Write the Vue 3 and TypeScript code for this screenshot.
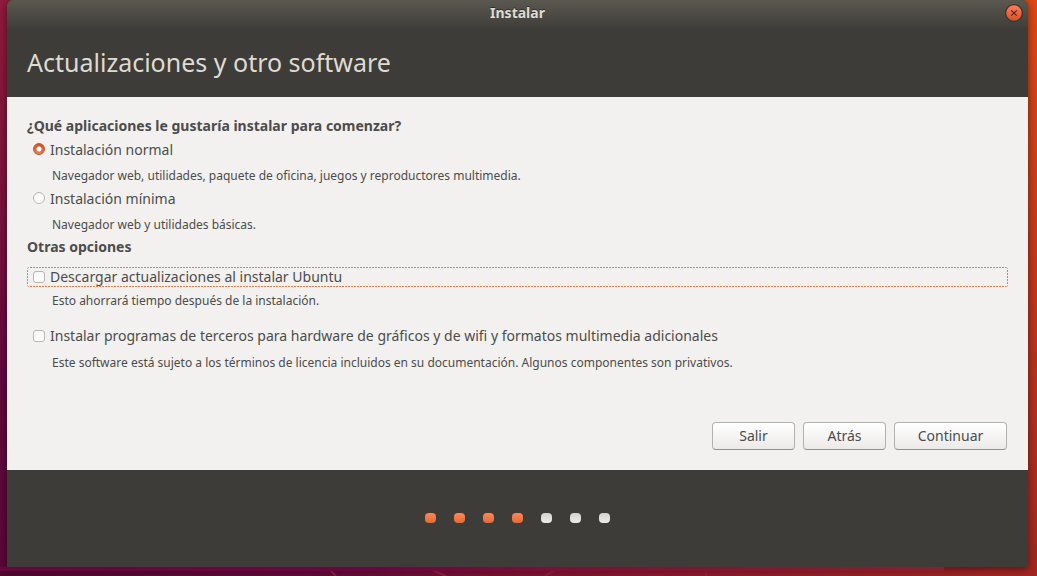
<script setup lang="ts">
import { ref } from 'vue'

interface InstallMode {
  id: string
  label: string
  hint: string
}

const modes: InstallMode[] = [
  {
    id: 'normal',
    label: 'Instalación normal',
    hint: 'Navegador web, utilidades, paquete de oficina, juegos y reproductores multimedia.',
  },
  { id: 'minimal', label: 'Instalación mínima', hint: 'Navegador web y utilidades básicas.' },
]

const mode = ref('normal')
const downloadUpdates = ref(false)
const thirdParty = ref(false)

const totalSteps = 7
const currentStep = 4
</script>

<template>
  <div class="desktop">
    <svg class="wallpaper" viewBox="0 0 1037 576" preserveAspectRatio="none" aria-hidden="true">
      <defs>
        <linearGradient id="left-side" x1="0" y1="0" x2="0" y2="1">
          <stop offset="0" stop-color="#931a3c" />
          <stop offset="0.35" stop-color="#7c143c" />
          <stop offset="0.65" stop-color="#65083f" />
          <stop offset="1" stop-color="#5a0838" />
        </linearGradient>
        <linearGradient id="right-side" x1="0" y1="0" x2="0" y2="1">
          <stop offset="0" stop-color="#dd4914" />
          <stop offset="0.5" stop-color="#c0381c" />
          <stop offset="1" stop-color="#a02822" />
        </linearGradient>
        <linearGradient id="bottom-side" x1="0" y1="0" x2="1" y2="0">
          <stop offset="0" stop-color="#520630" />
          <stop offset="0.3" stop-color="#600a38" />
          <stop offset="0.6" stop-color="#86162e" />
          <stop offset="1" stop-color="#a42621" />
        </linearGradient>
      </defs>
      <rect width="518" height="576" fill="url(#left-side)" />
      <rect x="518" width="519" height="576" fill="url(#right-side)" />
      <rect y="567" width="1037" height="9" fill="url(#bottom-side)" />
      <path
        d="M330 570l6 6M432 570l14 6M555 570l-10 6M706 570v6M824 570l-6 6"
        stroke="#8e1f3e"
        stroke-width="2"
        fill="none"
      />
    </svg>

    <main class="window">
      <header class="titlebar">
        <span class="titlebar-text">Instalar</span>
        <button class="close" type="button" aria-label="Cerrar">
          <svg viewBox="0 0 18 18" aria-hidden="true">
            <defs>
              <linearGradient id="close-fill" x1="0" y1="0" x2="0" y2="1">
                <stop offset="0" stop-color="#f78060" />
                <stop offset="1" stop-color="#e04c1c" />
              </linearGradient>
            </defs>
            <circle cx="9" cy="9" r="8.4" fill="url(#close-fill)" stroke="#35342f" stroke-width="1.2" />
            <path d="M6.2 6.4l5.6 5.2M11.8 6.4l-5.6 5.2" stroke="#4a2a1a" stroke-width="1.2" />
          </svg>
        </button>
      </header>

      <h1 class="page-title">Actualizaciones y otro software</h1>

      <form class="content" @submit.prevent>
        <fieldset class="group">
          <legend class="heading">¿Qué aplicaciones le gustaría instalar para comenzar?</legend>
          <div v-for="item in modes" :key="item.id" class="mode">
            <label class="option">
              <input v-model="mode" type="radio" name="mode" :value="item.id" class="radio" />
              <span>{{ item.label }}</span>
            </label>
            <p class="hint">{{ item.hint }}</p>
          </div>
        </fieldset>

        <fieldset class="group extras">
          <legend class="heading">Otras opciones</legend>
          <label class="option focused">
            <input v-model="downloadUpdates" type="checkbox" class="check" />
            <span>Descargar actualizaciones al instalar Ubuntu</span>
          </label>
          <p class="hint">Esto ahorrará tiempo después de la instalación.</p>
          <label class="option third-party">
            <input v-model="thirdParty" type="checkbox" class="check" />
            <span>Instalar programas de terceros para hardware de gráficos y de wifi y formatos multimedia adicionales</span>
          </label>
          <p class="hint">
            Este software está sujeto a los términos de licencia incluidos en su documentación. Algunos componentes son privativos.
          </p>
        </fieldset>

        <div class="actions">
          <button type="button" class="btn">Salir</button>
          <button type="button" class="btn">Atrás</button>
          <button type="submit" class="btn wide">Continuar</button>
        </div>
      </form>

      <footer class="steps">
        <span v-for="n in totalSteps" :key="n" class="dot" :class="{ done: n <= currentStep }"></span>
      </footer>
    </main>
  </div>
</template>

<style>
body {
  margin: 0;
}
</style>

<style scoped>
.desktop {
  position: relative;
  display: flex;
  box-sizing: border-box;
  min-height: 100vh;
  padding: 0 9px 9px 7px;
  overflow: hidden;
  background: #5a0838;
  color: #4c4c4c;
  font-family: 'Noto Sans', 'Open Sans', sans-serif;
  font-size: 14px;
  line-height: 20px;
}

/* Light band of the wallpaper under the window's lower edge */
.desktop::after {
  position: absolute;
  bottom: 5px;
  left: 0;
  width: 91%;
  height: 4px;
  background: linear-gradient(90deg, #62083c, #66083f 40%, #781236 60%, #86222a);
  content: '';
}

.wallpaper {
  position: absolute;
  inset: 0;
  width: 100%;
  height: 100%;
}

.window {
  position: relative;
  display: flex;
  flex: 1;
  flex-direction: column;
  border-radius: 6px 6px 0 0;
  background: #3d3c38;
  box-shadow: 0 2px 8px rgba(0, 0, 0, 0.5);
}

.titlebar {
  display: grid;
  grid-template-columns: 1fr auto 1fr;
  align-items: center;
  box-sizing: border-box;
  height: 27px;
  padding: 0 5px 2px;
  border-radius: 6px 6px 0 0;
  background: linear-gradient(#5b584f, #403f3a);
}

.titlebar-text {
  grid-column: 2;
  color: #dfdbd2;
  font-weight: 700;
  text-shadow: 0 -1px #2d2c28;
}

.close {
  justify-self: end;
  width: 18px;
  height: 18px;
  padding: 0;
  border: 0;
  border-radius: 50%;
  background: none;
}

.close svg {
  display: block;
}

.page-title {
  margin: 0;
  padding: 17px 20px;
  color: #dfdbd2;
  font-size: 25px;
  font-weight: 400;
  line-height: 36px;
}

.content {
  display: flex;
  flex: 1;
  flex-direction: column;
  padding: 19px 20px 20px;
  background: #f2f1ef;
}

.group {
  min-width: 0;
  margin: 0;
  padding: 0;
  border: 0;
}

.heading {
  margin-bottom: 4px;
  padding: 0;
  font-weight: 700;
}

.mode {
  margin-bottom: 3px;
}

.mode:last-child {
  margin-bottom: 2px;
}

.option {
  display: flex;
  align-items: center;
  gap: 5px;
  padding: 0 6px;
}

.hint {
  margin: 6px 0 0 25px;
  font-size: 12px;
}

.extras .heading {
  margin-bottom: 10px;
}

.focused {
  --dash: #f07746 0 2px, transparent 2px 3px;
  height: 20px;
  border-radius: 3px;
  background:
    repeating-linear-gradient(90deg, var(--dash)) top / 100% 1px no-repeat,
    repeating-linear-gradient(90deg, var(--dash)) bottom / 100% 1px no-repeat,
    repeating-linear-gradient(var(--dash)) left / 1px 100% no-repeat,
    repeating-linear-gradient(var(--dash)) right / 1px 100% no-repeat;
}

.focused + .hint {
  margin-top: 4px;
}

.third-party {
  margin: 15px 0 7px;
}

.radio,
.check {
  flex: none;
  box-sizing: border-box;
  width: 12px;
  height: 12px;
  margin: 0;
  appearance: none;
  border: 1px solid #b8b6b2;
  background: linear-gradient(#f6f6f5, #ffffff);
}

.radio {
  margin-bottom: 2px;
  border-radius: 50%;
}

.radio:checked {
  border-color: #c2522a;
  background: radial-gradient(circle, #ffffff 2px, transparent 3px), linear-gradient(#cf4f22, #ea7f57);
}

.check {
  border-radius: 3px;
}

.actions {
  display: flex;
  justify-content: flex-end;
  gap: 8px;
  margin-top: auto;
  padding-right: 1px;
}

.btn {
  box-sizing: border-box;
  width: 83px;
  height: 28px;
  padding: 0;
  border: 1px solid #b3b1ad;
  border-bottom-color: #93918d;
  border-radius: 4px;
  background: linear-gradient(#ffffff, #ebeae8);
  color: #4c4c4c;
  font: inherit;
}

.wide {
  width: 113px;
}

.steps {
  display: flex;
  align-items: center;
  justify-content: center;
  gap: 18px;
  box-sizing: border-box;
  height: 97px;
  padding-bottom: 2px;
}

.dot {
  width: 11px;
  height: 10px;
  border-radius: 4px;
  background: linear-gradient(#d2d2d1, #ececeb);
}

.dot.done {
  background: linear-gradient(#f58a60, #ea682f);
}
</style>
